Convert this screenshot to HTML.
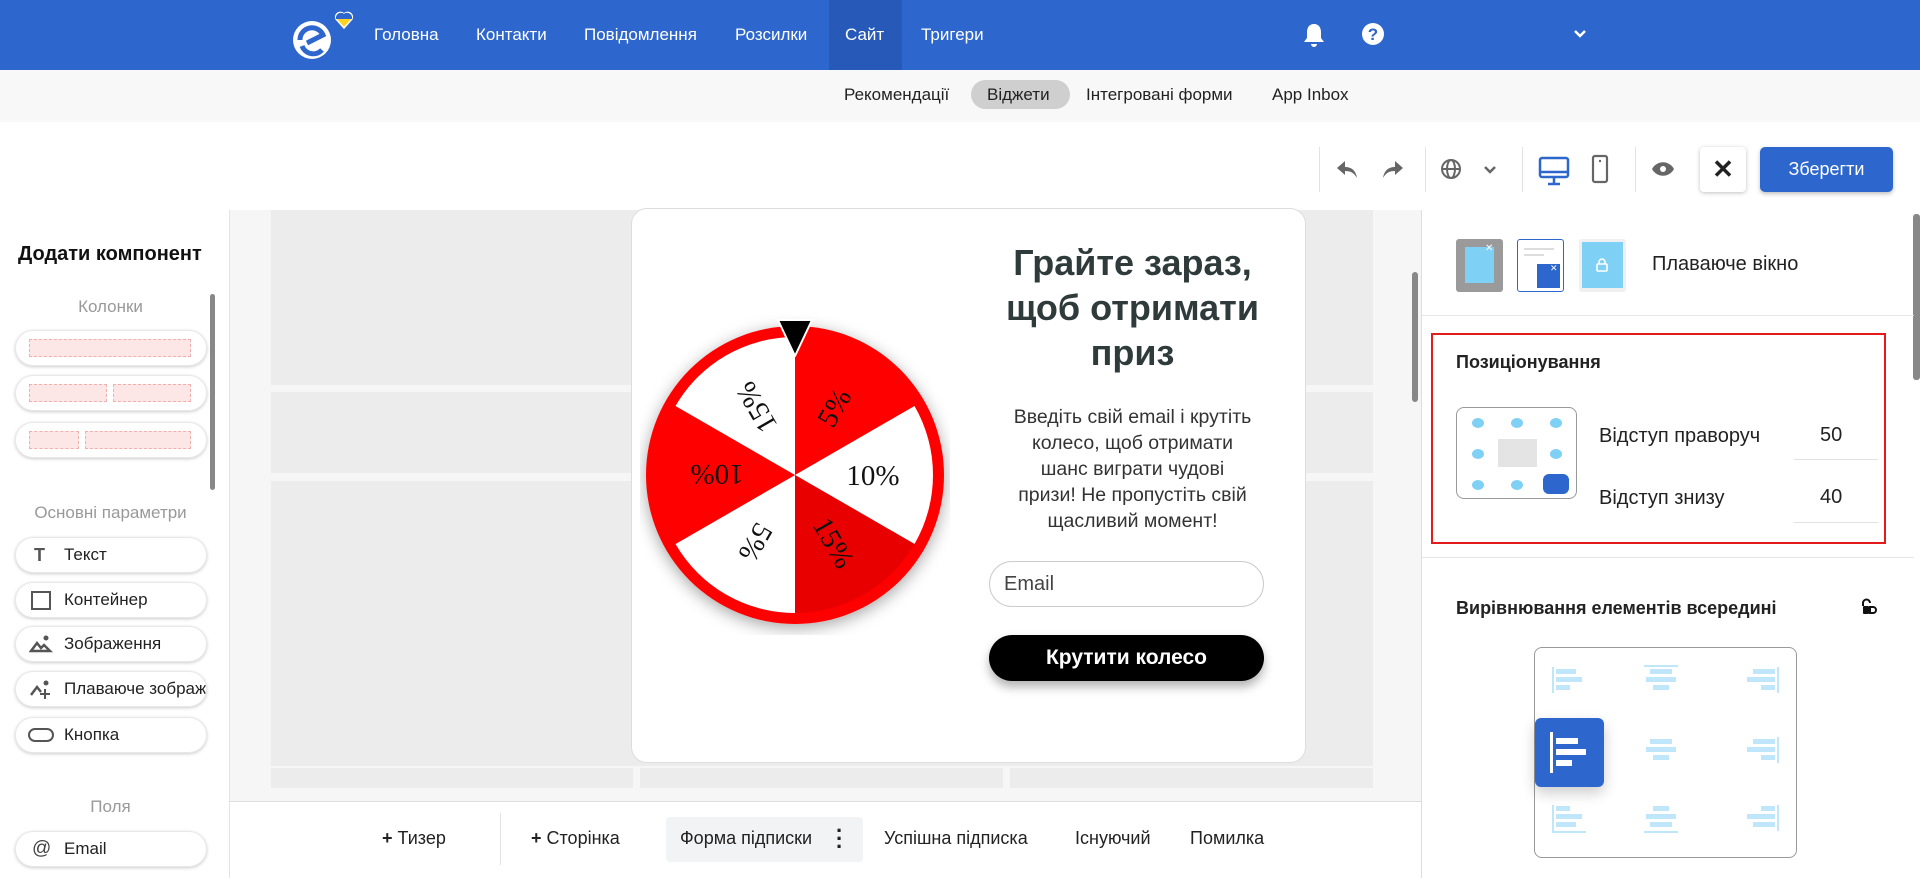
<!DOCTYPE html>
<html><head><meta charset="utf-8"><style>
*{box-sizing:border-box;margin:0;padding:0}
body{width:1920px;height:878px;overflow:hidden;position:relative;font-family:"Liberation Sans",sans-serif;background:#fff;color:#222}
.a{position:absolute}
.hdr{left:0;top:0;width:1920px;height:70px;background:#2d66cc}
.nav{top:0;height:70px;line-height:70px;color:#fff;font-size:17px}
.sub{left:0;top:70px;width:1920px;height:52px;background:#f8f8f8}
.st{top:83px;font-size:17px;color:#222;line-height:24px}
.sep{width:1px;background:#e2e2e2}
.pill{border-radius:20px;background:#fff;box-shadow:0 1px 3px rgba(0,0,0,.2);border:1px solid #e8e8e8}
.li{left:15px;width:192px;height:36px;font-size:17px;line-height:34px;padding-left:48px}
.gl{font-size:17px;color:#999;width:229px;text-align:center;left:0}
.blk{background:#ececec}
</style></head><body>
<div class="a hdr"></div>
<svg class="a" style="left:288px;top:10px" width="72" height="52" viewBox="0 0 72 52">
<circle cx="24" cy="30" r="19" fill="#fff"/>
<path d="M12 30 a12 12 0 0 1 23 -5 l-16 8" stroke="#2d66cc" stroke-width="5" fill="none"/>
<path d="M14 36 a12 12 0 0 0 20 4" stroke="#2d66cc" stroke-width="5" fill="none"/>
<path d="M56 4 c-4-4-10 0-8 5 l8 9 8-9 c2-5-4-9-8-5z" fill="#ffd21f" stroke="#fff" stroke-width="1.5"/>
<path d="M48 9 c-1-5 5-8 8-5 c3-3 9 0 8 5z" fill="#2d66cc"/>
</svg>
<div class="a" style="left:829px;top:0;width:73px;height:70px;background:#2759b8"></div>
<div class="a nav" style="left:374px">Головна</div>
<div class="a nav" style="left:476px">Контакти</div>
<div class="a nav" style="left:584px">Повідомлення</div>
<div class="a nav" style="left:735px">Розсилки</div>
<div class="a nav" style="left:845px">Сайт</div>
<div class="a nav" style="left:921px">Тригери</div>
<svg class="a" style="left:1302px;top:22px" width="24" height="26" viewBox="0 0 24 26"><path d="M12 2c-5 0-7 4-7 8v6l-3 4h20l-3-4v-6c0-4-2-8-7-8z M9 22a3 3 0 0 0 6 0z" fill="#fff"/></svg>
<svg class="a" style="left:1361px;top:22px" width="24" height="24" viewBox="0 0 24 24"><circle cx="12" cy="12" r="11" fill="#fff"/><text x="12" y="18" text-anchor="middle" font-size="17" font-weight="bold" fill="#2d66cc" font-family="Liberation Sans">?</text></svg>
<svg class="a" style="left:1573px;top:29px" width="14" height="10" viewBox="0 0 14 10"><path d="M2 2l5 5 5-5" stroke="#fff" stroke-width="2.5" fill="none"/></svg>

<div class="a sub"></div>
<div class="a st" style="left:844px">Рекомендації</div>
<div class="a" style="left:971px;top:80px;width:99px;height:29px;border-radius:15px;background:#cfcfcf"></div>
<div class="a st" style="left:987px">Віджети</div>
<div class="a st" style="left:1086px">Інтегровані форми</div>
<div class="a st" style="left:1272px">App Inbox</div>

<div class="a sep" style="left:1319px;top:147px;height:45px"></div>
<div class="a sep" style="left:1425px;top:147px;height:45px"></div>
<div class="a sep" style="left:1522px;top:147px;height:45px"></div>
<div class="a sep" style="left:1635px;top:147px;height:45px"></div>
<svg class="a" style="left:1335px;top:158px" width="24" height="22" viewBox="0 0 24 22"><path d="M10 3L2 10l8 7v-4c6 0 9 2 12 7-1-7-5-11-12-11z" fill="#666"/></svg>
<svg class="a" style="left:1381px;top:158px" width="24" height="22" viewBox="0 0 24 22"><path d="M14 3l8 7-8 7v-4c-6 0-9 2-12 7 1-7 5-11 12-11z" fill="#666"/></svg>
<svg class="a" style="left:1440px;top:158px" width="22" height="22" viewBox="0 0 22 22" fill="none" stroke="#666" stroke-width="2"><circle cx="11" cy="11" r="9"/><ellipse cx="11" cy="11" rx="4" ry="9"/><path d="M2 11h18"/></svg>
<svg class="a" style="left:1483px;top:165px" width="14" height="10" viewBox="0 0 14 10"><path d="M2 2l5 5 5-5" stroke="#666" stroke-width="2.5" fill="none"/></svg>
<svg class="a" style="left:1538px;top:155px" width="32" height="32" viewBox="0 0 32 32" fill="none" stroke="#2d66cc" stroke-width="2.5"><rect x="2" y="3" width="28" height="19" rx="2"/><path d="M2 17h28M16 22v6M10 29h12"/></svg>
<svg class="a" style="left:1591px;top:154px" width="18" height="30" viewBox="0 0 18 30" fill="none" stroke="#666" stroke-width="2.2"><rect x="2" y="2" width="14" height="26" rx="2"/><path d="M8 7h2"/></svg>
<svg class="a" style="left:1651px;top:160px" width="24" height="18" viewBox="0 0 24 18"><path d="M1 9c5-9 17-9 22 0-5 9-17 9-22 0z" fill="#666"/><circle cx="12" cy="9" r="3" fill="#fff"/></svg>
<div class="a" style="left:1700px;top:147px;width:46px;height:45px;border-radius:4px;background:#fff;box-shadow:0 1px 4px rgba(0,0,0,.25);text-align:center;line-height:45px;font-size:26px;font-weight:bold">✕</div>
<div class="a" style="left:1760px;top:147px;width:133px;height:45px;border-radius:5px;background:#2d66cc;box-shadow:0 2px 4px rgba(0,0,0,.25);color:#fff;text-align:center;line-height:45px;font-size:18px">Зберегти</div>

<!-- canvas -->
<div class="a" style="left:229px;top:210px;width:1193px;height:592px;background:#f6f6f6;border-left:1px solid #e4e4e4"></div>
<div class="a blk" style="left:271px;top:210px;width:1102px;height:175px"></div>
<div class="a blk" style="left:271px;top:392px;width:1102px;height:81px"></div>
<div class="a blk" style="left:271px;top:481px;width:1102px;height:285px"></div>
<div class="a blk" style="left:271px;top:768px;width:362px;height:20px"></div>
<div class="a blk" style="left:640px;top:768px;width:363px;height:20px"></div>
<div class="a blk" style="left:1010px;top:768px;width:363px;height:20px"></div>
<div class="a" style="left:1412px;top:272px;width:6px;height:130px;border-radius:3px;background:#888"></div>

<!-- popup -->
<div class="a" style="left:631px;top:208px;width:675px;height:555px;background:#fff;border:1px solid #ddd;border-radius:16px"></div>
<svg class="a" style="left:640px;top:315px" width="310" height="320" viewBox="-155 -160 310 320">
<defs><filter id="sh"><feDropShadow dx="0" dy="4" stdDeviation="8" flood-opacity=".35"/></filter></defs>
<circle r="149" fill="#f00" filter="url(#sh)"/>
<g>
<path d="M0 0L0 -138A138 138 0 0 1 119.5 -69z" fill="#f00"/>
<path d="M0 0L119.5 -69A138 138 0 0 1 119.5 69z" fill="#fff"/>
<path d="M0 0L119.5 69A138 138 0 0 1 0 138z" fill="#e80000"/>
<path d="M0 0L0 138A138 138 0 0 1 -119.5 69z" fill="#fff"/>
<path d="M0 0L-119.5 69A138 138 0 0 1 -119.5 -69z" fill="#f00"/>
<path d="M0 0L-119.5 -69A138 138 0 0 1 0 -138z" fill="#fff"/>
</g>
<g font-family="Liberation Serif" font-size="29" text-anchor="middle" fill="#111">
<text transform="rotate(-60) translate(78 10)">5%</text>
<text transform="rotate(0) translate(78 10)">10%</text>
<text transform="rotate(60) translate(78 10)">15%</text>
<text transform="rotate(120) translate(78 10)">5%</text>
<text transform="rotate(180) translate(78 10)">10%</text>
<text transform="rotate(240) translate(78 10)">15%</text>
</g>
<path d="M-17 -155h34l-17 36z" fill="#000" stroke="#fff" stroke-width="2" stroke-linejoin="round"/>
</svg>
<div class="a" style="left:960px;top:240px;width:345px;text-align:center;font-size:36px;font-weight:bold;line-height:45px;color:#2f3b3b">Грайте зараз,<br>щоб отримати<br>приз</div>
<div class="a" style="left:985px;top:404px;width:295px;text-align:center;font-size:19.5px;line-height:26px;color:#333">Введіть свій email і крутіть<br>колесо, щоб отримати<br>шанс виграти чудові<br>призи! Не пропустіть свій<br>щасливий момент!</div>
<div class="a" style="left:989px;top:561px;width:275px;height:46px;border:1px solid #ccc;border-radius:23px;font-size:20px;line-height:44px;padding-left:14px;color:#444">Email</div>
<div class="a" style="left:989px;top:635px;width:275px;height:46px;border-radius:23px;background:#000;color:#fff;font-size:21px;font-weight:bold;text-align:center;line-height:46px;box-shadow:0 6px 10px rgba(0,0,0,.3)">Крутити колесо</div>

<!-- bottom bar -->
<div class="a" style="left:229px;top:801px;width:1193px;height:77px;background:#fff;border-top:1px solid #ddd;border-left:1px solid #e4e4e4"></div>
<div class="a sep" style="left:500px;top:813px;height:52px"></div>
<div class="a" style="left:666px;top:817px;width:197px;height:45px;border-radius:4px;background:#f1f3f5"></div>
<div class="a" style="top:828px;left:382px;font-size:18px"><b>+</b> Тизер</div>
<div class="a" style="top:828px;left:531px;font-size:18px"><b>+</b> Сторінка</div>
<div class="a" style="top:828px;left:680px;font-size:18px">Форма підписки</div>
<div class="a" style="top:827px;left:836px;font-size:22px;font-weight:bold;line-height:8px">·<br>·<br>·</div>
<div class="a" style="top:828px;left:884px;font-size:18px">Успішна підписка</div>
<div class="a" style="top:828px;left:1075px;font-size:18px">Існуючий</div>
<div class="a" style="top:828px;left:1190px;font-size:18px">Помилка</div>

<!-- left panel -->
<div class="a" style="left:18px;top:243px;font-size:20px;font-weight:bold;color:#111">Додати компонент</div>
<div class="a gl" style="top:297px;left:-4px">Колонки</div>
<div class="a" style="left:210px;top:294px;width:5px;height:196px;border-radius:3px;background:#888"></div>
<div class="a pill" style="left:15px;top:330px;width:192px;height:36px"><div class="a" style="left:13px;top:8px;width:162px;height:18px;background:#fde6e6;border:1px dashed #f0b0b0"></div></div>
<div class="a pill" style="left:15px;top:375px;width:192px;height:36px"><div class="a" style="left:13px;top:8px;width:78px;height:18px;background:#fde6e6;border:1px dashed #f0b0b0"></div><div class="a" style="left:97px;top:8px;width:78px;height:18px;background:#fde6e6;border:1px dashed #f0b0b0"></div></div>
<div class="a pill" style="left:15px;top:422px;width:192px;height:36px"><div class="a" style="left:13px;top:8px;width:50px;height:18px;background:#fde6e6;border:1px dashed #f0b0b0"></div><div class="a" style="left:69px;top:8px;width:106px;height:18px;background:#fde6e6;border:1px dashed #f0b0b0"></div></div>
<div class="a gl" style="top:503px;left:-4px">Основні параметри</div>
<div class="a pill li" style="top:537px">Текст<span class="a" style="left:18px;top:0;font-weight:bold;color:#555;font-size:18px">T</span></div>
<div class="a pill li" style="top:582px">Контейнер<span class="a" style="left:15px;top:8px;width:20px;height:19px;border:2.5px solid #555"></span></div>
<div class="a pill li" style="top:626px">Зображення<svg class="a" style="left:13px;top:7px" width="24" height="20" viewBox="0 0 24 20"><path d="M2 17l6-8 4 5 3-3 6 6z" fill="none" stroke="#555" stroke-width="2.5"/><circle cx="17" cy="4" r="2.5" fill="#555"/></svg></div>
<div class="a pill li" style="top:671px;overflow:hidden;white-space:nowrap">Плаваюче зображення<svg class="a" style="left:13px;top:7px" width="24" height="22" viewBox="0 0 24 22"><path d="M2 16l6-8 4 5" fill="none" stroke="#555" stroke-width="2.5"/><circle cx="17" cy="4" r="2.5" fill="#555"/><path d="M16 10v10M11 15h10" stroke="#555" stroke-width="2"/></svg></div>
<div class="a pill li" style="top:717px">Кнопка<span class="a" style="left:12px;top:10px;width:26px;height:14px;border:2.5px solid #555;border-radius:7px"></span></div>
<div class="a gl" style="top:797px;left:-4px">Поля</div>
<div class="a pill li" style="top:831px">Email<span class="a" style="left:16px;top:0;font-size:19px;color:#444">@</span></div>

<!-- right panel -->
<div class="a" style="left:1421px;top:210px;width:1px;height:668px;background:#ddd"></div>
<div class="a" style="left:1913px;top:214px;width:7px;height:166px;border-radius:3px;background:#888"></div>
<div class="a" style="left:1456px;top:239px;width:47px;height:53px;background:#9a9a9a;border-radius:3px"><div class="a" style="left:9px;top:8px;width:29px;height:36px;background:#7fd0f5"></div><div class="a" style="left:29px;top:4px;color:#fff;font-size:10px">✕</div></div>
<div class="a" style="left:1517px;top:239px;width:47px;height:53px;border:1.5px solid #2d66cc;border-radius:3px;background:#fff"><div class="a" style="left:6px;top:8px;width:30px;height:2px;background:#ddd"></div><div class="a" style="left:6px;top:14px;width:20px;height:2px;background:#ddd"></div><div class="a" style="left:19px;top:24px;width:23px;height:24px;background:#2d66cc"></div><div class="a" style="left:32px;top:23px;color:#fff;font-size:9px">✕</div></div>
<div class="a" style="left:1579px;top:239px;width:47px;height:53px;background:#f0f0f0;border-radius:3px"><div class="a" style="left:3px;top:3px;width:41px;height:46px;background:#7fd0f5"></div>
<svg class="a" style="left:16px;top:18px" width="14" height="16" viewBox="0 0 14 16" fill="none" stroke="#fff" stroke-width="1.6"><path d="M4 7V5a3 3 0 0 1 6 0v2"/><rect x="2" y="7" width="10" height="7" rx="1"/></svg></div>
<div class="a" style="left:1652px;top:253px;font-size:20px">Плаваюче вікно</div>
<div class="a" style="left:1422px;top:315px;width:492px;height:1px;background:#e6e6e6"></div>
<div class="a" style="left:1431px;top:333px;width:455px;height:211px;border:2px solid #e41b1b"></div>
<div class="a" style="left:1456px;top:352px;font-size:18px;font-weight:bold">Позиціонування</div>
<div class="a" style="left:1456px;top:407px;width:121px;height:92px;border:1.5px solid #999;border-radius:8px"></div>
<svg class="a" style="left:1456px;top:407px" width="121" height="92">
<g fill="#7fd0f5"><ellipse cx="22" cy="16" rx="6" ry="5"/><ellipse cx="61" cy="16" rx="6" ry="5"/><ellipse cx="100" cy="16" rx="6" ry="5"/><ellipse cx="22" cy="47" rx="6" ry="5"/><ellipse cx="100" cy="47" rx="6" ry="5"/><ellipse cx="22" cy="78" rx="6" ry="5"/><ellipse cx="61" cy="78" rx="6" ry="5"/></g>
<rect x="42" y="32" width="39" height="28" fill="#e4e4e4"/><rect x="87" y="67" width="26" height="20" rx="6" fill="#2d66cc"/></svg>
<div class="a" style="left:1599px;top:425px;font-size:20px">Відступ праворуч</div>
<div class="a" style="left:1820px;top:424px;font-size:20px">50</div>
<div class="a" style="left:1794px;top:459px;width:84px;height:1px;background:#e2e2e2"></div>
<div class="a" style="left:1599px;top:487px;font-size:20px">Відступ знизу</div>
<div class="a" style="left:1820px;top:486px;font-size:20px">40</div>
<div class="a" style="left:1794px;top:522px;width:84px;height:1px;background:#e2e2e2"></div>
<div class="a" style="left:1422px;top:557px;width:492px;height:1px;background:#e6e6e6"></div>
<div class="a" style="left:1456px;top:598px;font-size:18px;font-weight:bold">Вирівнювання елементів всередині</div>
<svg class="a" style="left:1860px;top:598px" width="18" height="18" viewBox="0 0 18 18"><path d="M3 8V5a3.5 3.5 0 0 1 7 0" fill="none" stroke="#111" stroke-width="2"/><rect x="3" y="8" width="6" height="8" rx="1" fill="#111"/><path d="M10 9h3a3 3 0 0 1 0 6h-3z" fill="none" stroke="#111" stroke-width="2"/></svg>
<div class="a" style="left:1534px;top:647px;width:263px;height:211px;border:1.5px solid #999;border-radius:8px"></div>
<svg class="a" style="left:1534px;top:647px" width="263" height="211">
<g fill="#bfe6fa">
<rect x="18" y="20" width="2" height="26"/><rect x="22" y="22" width="20" height="5"/><rect x="22" y="30" width="26" height="5"/><rect x="22" y="38" width="14" height="5"/>
<rect x="116" y="22" width="22" height="5"/><rect x="112" y="30" width="30" height="5"/><rect x="119" y="38" width="16" height="5"/><rect x="110" y="18" width="34" height="2"/>
<rect x="243" y="20" width="2" height="26"/><rect x="219" y="22" width="22" height="5"/><rect x="213" y="30" width="28" height="5"/><rect x="227" y="38" width="14" height="5"/>
<rect x="116" y="92" width="22" height="5"/><rect x="112" y="100" width="30" height="5"/><rect x="119" y="108" width="16" height="5"/>
<rect x="243" y="90" width="2" height="26"/><rect x="219" y="92" width="22" height="5"/><rect x="213" y="100" width="28" height="5"/><rect x="227" y="108" width="14" height="5"/>
<rect x="18" y="158" width="2" height="26"/><rect x="22" y="159" width="14" height="5"/><rect x="22" y="167" width="26" height="5"/><rect x="22" y="175" width="20" height="5"/><rect x="18" y="184" width="34" height="2"/>
<rect x="119" y="159" width="16" height="5"/><rect x="112" y="167" width="30" height="5"/><rect x="116" y="175" width="22" height="5"/><rect x="110" y="184" width="34" height="2"/>
<rect x="243" y="158" width="2" height="26"/><rect x="227" y="159" width="14" height="5"/><rect x="213" y="167" width="28" height="5"/><rect x="219" y="175" width="22" height="5"/>
</g></svg>
<div class="a" style="left:1535px;top:718px;width:69px;height:69px;border-radius:6px;background:#2d66cc;box-shadow:0 6px 14px rgba(0,0,0,.2)">
<svg width="69" height="69"><g fill="#fff"><rect x="15" y="14" width="3" height="41"/><rect x="21" y="20" width="22" height="6"/><rect x="21" y="31" width="30" height="6"/><rect x="21" y="42" width="16" height="6"/></g></svg></div>
</body></html>
